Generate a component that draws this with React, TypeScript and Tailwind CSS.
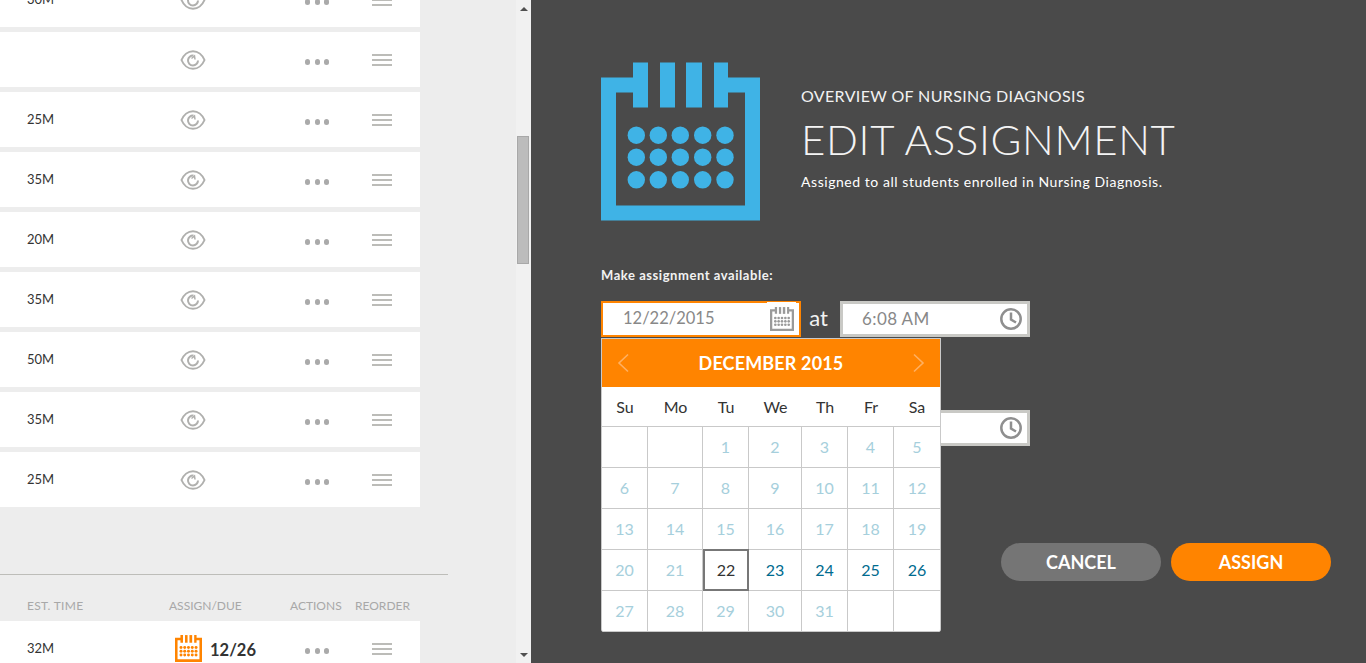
import React from 'react';

const times = ['30M', '', '25M', '35M', '20M', '35M', '50M', '35M', '25M'];
const colWidths = 'grid-cols-[46px_55px_46px_53px_46px_46px_46px]';
const weekdays = ['Su', 'Mo', 'Tu', 'We', 'Th', 'Fr', 'Sa'];
const days: (number | null)[] = [
  null, null, 1, 2, 3, 4, 5,
  6, 7, 8, 9, 10, 11, 12,
  13, 14, 15, 16, 17, 18, 19,
  20, 21, 22, 23, 24, 25, 26,
  27, 28, 29, 30, 31, null, null,
];

function EyeIcon() {
  return (
    <svg width="26" height="20" viewBox="0 0 26 20" fill="none" stroke="#b0b0ae" strokeWidth="2">
      <path d="M1.5 10 C3.5 5 8 1.2 13 1.2 C18 1.2 22.5 5 24.5 10 C22.5 15 18 18.8 13 18.8 C8 18.8 3.5 15 1.5 10Z" />
      <path d="M13.5 5.5 A5 5 0 1 0 18 10.5" />
      <path d="M11.5 8.5 L14.5 6 L15 9.5" strokeWidth="1.5" />
    </svg>
  );
}

function Dots() {
  return (
    <div className="flex w-[24px] justify-between mt-[5px]">
      <span className="w-[5px] h-[6px] rounded-full bg-[#aaaaaa]" />
      <span className="w-[5px] h-[6px] rounded-full bg-[#aaaaaa]" />
      <span className="w-[5px] h-[6px] rounded-full bg-[#aaaaaa]" />
    </div>
  );
}

function Lines() {
  return (
    <div className="flex flex-col gap-[3px] w-[20px]">
      <span className="h-[2px] bg-[#bcbcb8]" />
      <span className="h-[2px] bg-[#bcbcb8]" />
      <span className="h-[2px] bg-[#bcbcb8]" />
    </div>
  );
}

function CalendarGlyph({ color, size }: { color: string; size: number }) {
  return (
    <svg width={size} height={size} viewBox="0 0 159 158">
      <path fill={color} d="M0 15H32V0H47V45H32V30H15V143H144V30H127V45H113V0H127V15H159V158H0Z" />
      <rect fill={color} x="59" y="0" width="15" height="45" />
      <rect fill={color} x="85" y="0" width="16" height="45" />
      {[72.7, 94.7, 117.3].map((cy) =>
        [35.3, 57.3, 79.3, 101.7, 124].map((cx) => (
          <circle key={`${cx}-${cy}`} fill={color} cx={cx} cy={cy} r="8.7" />
        ))
      )}
    </svg>
  );
}

function ClockIcon() {
  return (
    <svg width="24" height="24" viewBox="0 0 24 24" fill="none" stroke="#8f8f8f" strokeWidth="2.5">
      <circle cx="12" cy="12" r="9.7" />
      <path d="M12 5.5V12.5L17 15.5" />
    </svg>
  );
}

function TimeInput({ value }: { value: string }) {
  return (
    <div className="w-[190px] h-[36px] bg-white border-[3px] border-[#c9c9c5] flex items-center pl-[19px] pr-[4px] justify-between">
      <span className="text-[17px] text-[#888888] tracking-[0.4px] -mt-[1px]">{value}</span>
      <ClockIcon />
    </div>
  );
}

function Calendar() {
  return (
    <div className="absolute -left-[2px] top-[35px] w-[340px] bg-white rounded-b-[3px] overflow-hidden z-10 border-x border-t border-[#c9c9c9]">
      <div className="h-[48px] bg-[#ff8400] flex items-center justify-between px-[15px]">
        <svg width="12" height="20" viewBox="0 0 12 20" fill="none" stroke="#ffb061" strokeWidth="1.6"><path d="M11 1.5L2 10L11 18.5" /></svg>
        <span className="text-white text-[18px] font-bold tracking-[0.15px]">DECEMBER 2015</span>
        <svg width="12" height="20" viewBox="0 0 12 20" fill="none" stroke="#ffb061" strokeWidth="1.6"><path d="M1 1.5L10 10L1 18.5" /></svg>
      </div>
      <div className={`grid ${colWidths} h-[39px] items-center text-center text-[16px] text-[#333333]`}>
        {weekdays.map((d) => (
          <span key={d}>{d}</span>
        ))}
      </div>
      <div className={`grid ${colWidths} auto-rows-[41px] border-t border-[#c9c9c9]`}>
        {days.map((d, i) => {
          const side = i % 7 === 6 ? '' : 'border-r';
          if (d === 22) {
            return (
              <div key={i} className="flex items-center justify-center text-[16px] text-[#333333] border-2 border-[#777777] -mt-[1px] h-[42px]">
                {d}
              </div>
            );
          }
          const color = d !== null && d >= 23 && d <= 26 ? 'text-[#006b8f]' : 'text-[#a6cfdc]';
          return (
            <div key={i} className={`flex items-center justify-center text-[16px] border-b border-[#c9c9c9] ${side} ${color}`}>
              {d}
            </div>
          );
        })}
      </div>
    </div>
  );
}

function AssignmentList() {
  return (
    <div className="w-[516px] h-full bg-[#ededed] overflow-hidden shrink-0 flex flex-col text-[13px] text-[#333333]">
      <div className="-mt-[28px] flex flex-col gap-[5px] w-[420px] shrink-0">
        {times.map((t, i) => (
          <div key={i} className="h-[55px] bg-white flex items-center pl-[27px]">
            <span className="w-[152px]">{t}</span>
            <div className="w-[28px] flex justify-center"><EyeIcon /></div>
            <div className="ml-[98px]"><Dots /></div>
            <div className="ml-[43px]"><Lines /></div>
          </div>
        ))}
      </div>
      <div className="w-[448px] border-t border-[#bdbdb9] mt-[67px] shrink-0" />
      <div className="w-[420px] h-[46px] shrink-0 flex items-end pb-[6px] pl-[27px] text-[12px] text-[#a8a8a8]">
        <span className="w-[142px] tracking-[0.3px]">EST. TIME</span>
        <span className="w-[121px]">ASSIGN/DUE</span>
        <span className="w-[65px]">ACTIONS</span>
        <span>REORDER</span>
      </div>
      <div className="w-[420px] h-[55px] bg-white flex items-center pl-[27px] shrink-0">
        <span className="w-[148px]">32M</span>
        <CalendarGlyph color="#ff8400" size={27} />
        <span className="ml-[8px] w-[95px] text-[16.5px] font-bold text-[#333333] mt-[4px]">12/26</span>
        <Dots />
        <div className="ml-[43px]"><Lines /></div>
      </div>
    </div>
  );
}

function Scrollbar() {
  return (
    <div className="w-[15px] h-full bg-[#f1f1f1] shrink-0 flex flex-col items-center">
      <div className="mt-[7px] w-0 h-0 border-x-[4px] border-x-transparent border-b-[4px] border-b-[#505050]" />
      <div className="mt-[125px] w-[12px] h-[128px] self-start ml-[1px] bg-[#bcbcbc] border border-[#a8a8a8]" />
      <div className="mt-auto mb-[6px] w-0 h-0 border-x-[4px] border-x-transparent border-t-[4px] border-t-[#505050]" />
    </div>
  );
}

export default function App() {
  return (
    <div className="w-[1366px] h-[663px] flex overflow-hidden font-['Lato','Liberation_Sans',sans-serif]">
      <AssignmentList />
      <Scrollbar />
      <div className="flex-1 h-full bg-[#4a4a4a] pl-[70px] pt-[62px] flex flex-col text-white">
        <div className="flex items-start">
          <CalendarGlyph color="#3fb3e6" size={159} />
          <div className="ml-[41px] flex flex-col mt-[24px]">
            <span className="text-[16px] leading-[20px] tracking-[0.35px] text-[#f2f2f2]">OVERVIEW OF NURSING DIAGNOSIS</span>
            <span className="text-[42px] leading-[50px] font-light tracking-[0.65px] mt-[8px] text-[#f4f4f4]">EDIT ASSIGNMENT</span>
            <span className="text-[14px] leading-[18px] mt-[9px] tracking-[0.55px]">Assigned to all students enrolled in Nursing Diagnosis.</span>
          </div>
        </div>
        <span className="mt-[45px] text-[13px] leading-[18px] font-bold tracking-[0.55px] text-[#f2f2f2]">Make assignment available:</span>
        <div className="mt-[17px] flex items-center">
          <div className="relative w-[200px] h-[36px] bg-white border-2 border-[#ff8400] flex items-center justify-between pl-[20px] pr-[5px]">
            <span className="absolute -top-[1px] right-[3px] w-[29px] h-[1px] bg-white" />
            <span className="text-[16.5px] text-[#888888] -mt-[1px]">12/22/2015</span>
            <CalendarGlyph color="#9a9a9a" size={24} />
            <Calendar />
          </div>
          <span className="w-[35px] text-center text-[22px] text-[#f2f2f2] -mt-[3px]">at</span>
          <div className="w-[4px]" />
          <TimeInput value="6:08 AM" />
        </div>
        <div className="mt-[73px] flex items-center">
          <div className="w-[239px]" />
          <TimeInput value="6:08 AM" />
        </div>
        <div className="mt-[97px] flex gap-[10px] pl-[400px]">
          <button className="w-[160px] h-[38px] rounded-full bg-[#757575] text-[18px] font-bold text-white">CANCEL</button>
          <button className="w-[160px] h-[38px] rounded-full bg-[#ff8400] text-[18px] font-bold text-white">ASSIGN</button>
        </div>
      </div>
    </div>
  );
}
